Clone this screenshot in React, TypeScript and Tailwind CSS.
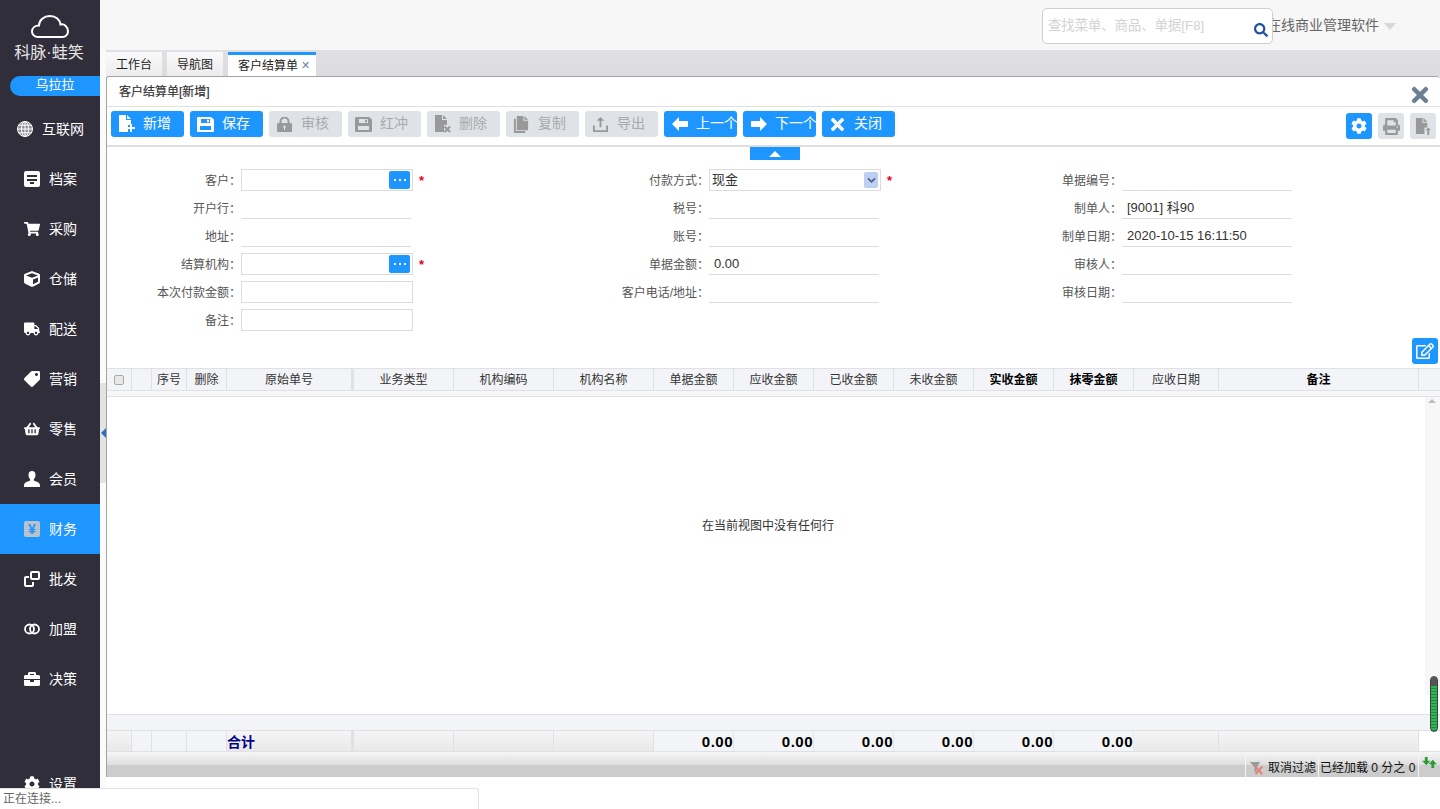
import React from 'react';
import {
  FaBriefcase,
  FaCog,
  FaCube,
  FaPrint,
  FaRegEdit,
  FaSearch,
  FaShoppingBasket,
  FaShoppingCart,
  FaTag,
  FaTimes,
  FaTruck,
} from 'react-icons/fa';

const font = 'font-["Liberation_Sans","Noto_Sans_CJK_SC",sans-serif]';

function FileIcon({ badge, className }: { badge?: 'plus' | 'x' | 'up'; className?: string }) {
  return (
    <svg viewBox="0 0 18 18" className={className} fill="currentColor">
      <path d="M1 0h7v5h5v5h-3v7H1z" />
      <path d="M9 0l4 4H9z" />
      {badge === 'plus' && <path d="M12 9h2v3h3v2h-3v3h-2v-3H9v-2h3z" />}
      {badge === 'x' && <path d="M10.500 11.500l5.500 5.500M16 11.500L10.500 17" fill="none" stroke="currentColor" strokeWidth="2.200" />}
      {badge === 'up' && <path d="M14 10l3 3h-2v5h-2v-5h-2z" />}
    </svg>
  );
}

function CopyIcon({ className }: { className?: string }) {
  return (
    <svg viewBox="0 0 18 18" className={className} fill="currentColor">
      <path d="M4 0h7v5h5v10H4z" />
      <path d="M12 0l4 4h-4z" />
      <path d="M1 3h2v13h10v2H1z" />
    </svg>
  );
}

function UploadIcon({ className }: { className?: string }) {
  return (
    <svg viewBox="0 0 18 18" className={className} fill="currentColor">
      <path d="M9 1l4 4h-3v7H8V5H5z" />
      <path d="M1 10h2v5h12v-5h2v7H1z" />
    </svg>
  );
}

function FloppyIcon({ className }: { className?: string }) {
  return (
    <svg viewBox="0 0 17 15" className={className} fill="currentColor">
      <path
        fillRule="evenodd"
        d="M1 0h13l3 2.500V14a1 1 0 01-1 1H1a1 1 0 01-1-1V1a1 1 0 011-1zm3 2v4h9V2zm8 .8v2.400h-2V2.800zM3 9v4h11V9z"
      />
    </svg>
  );
}

function LockIcon({ className }: { className?: string }) {
  return (
    <svg viewBox="0 0 15 15" className={className} fill="currentColor">
      <path d="M3.500 7V4.500a4 4 0 018 0V7" fill="none" stroke="currentColor" strokeWidth="2" />
      <path
        fillRule="evenodd"
        d="M1 6h13a1 1 0 011 1v7a1 1 0 01-1 1H1a1 1 0 01-1-1V7a1 1 0 011-1zm6.500 2.500A1.300 1.300 0 007 11v2h1v-2a1.300 1.300 0 00-.5-2.500z"
      />
    </svg>
  );
}

function ArrowIcon({ flip }: { flip?: boolean }) {
  return (
    <svg viewBox="0 0 16 14" className={`h-[14px] w-[16px] ${flip ? '-scale-x-100' : ''}`} fill="currentColor">
      <path d="M0 7L7 0v4h9v6H7v4z" />
    </svg>
  );
}

function CloudLogo() {
  return (
    <svg viewBox="0 0 38 23" className="h-[23px] w-[38px]" fill="none" stroke="#fff" strokeWidth="2">
      <path d="M7 22C3.500 22 1 19.500 1 16.500 1 13 4 10.500 8 10.500 8 5 13 1 19 1c6 0 10 4 10.500 8.500 4-1 7.500 2.500 7.500 7 0 3-2.500 5.500-5.500 5.500z" />
    </svg>
  );
}

function GlobeIcon() {
  return (
    <svg viewBox="0 0 16 16" className="h-4 w-4" fill="none" stroke="#fff" strokeWidth="1">
      <circle cx="8" cy="8" r="7.500" fill="#8f8d96" />
      <ellipse cx="8" cy="8" rx="3.500" ry="7.500" />
      <path d="M8 .5v15M.5 8h15M1.500 4.200h13M1.500 11.800h13" />
    </svg>
  );
}

function PersonIcon() {
  return (
    <svg viewBox="0 0 16 16" className="h-4 w-4" fill="#fff">
      <path d="M8 0c2.200 0 3.500 1.600 3.500 4 0 2-.8 3.500-1.700 4.300v1.200c1.500.8 6.200 1.500 6.200 5V16H0v-1.500c0-3.500 4.700-4.200 6.200-5V8.300C5.300 7.500 4.500 6 4.500 4 4.500 1.600 5.800 0 8 0z" />
    </svg>
  );
}

const menu: { label: string; icon: React.ReactNode; active?: boolean }[] = [
  { label: '互联网', icon: <GlobeIcon /> },
  {
    label: '档案',
    icon: (
      <svg viewBox="0 0 16 16" className="h-4 w-4" fill="#fff">
        <path d="M2 0h12a2 2 0 012 2v12a2 2 0 01-2 2H2a2 2 0 01-2-2V2a2 2 0 012-2zm1 4v2h10V4zm0 4v2h10V8zm3 3v2h4v-2z" fillRule="evenodd" />
      </svg>
    ),
  },
  { label: '采购', icon: <FaShoppingCart className="h-4 w-4" /> },
  { label: '仓储', icon: <FaCube className="h-4 w-4" /> },
  { label: '配送', icon: <FaTruck className="h-4 w-4" /> },
  { label: '营销', icon: <FaTag className="h-4 w-4 -scale-x-100" /> },
  { label: '零售', icon: <FaShoppingBasket className="h-4 w-4" /> },
  { label: '会员', icon: <PersonIcon /> },
  {
    label: '财务',
    active: true,
    icon: (
      <span className="flex h-4 w-4 items-center justify-center rounded-[2px] bg-[#b9c1cb] text-[14px] font-bold leading-none text-[#1e96ff]">
        ¥
      </span>
    ),
  },
  {
    label: '批发',
    icon: (
      <svg viewBox="0 0 16 16" className="h-4 w-4" fill="none" stroke="#fff" strokeWidth="2">
        <rect x="7" y="1" width="8" height="7" rx="1" />
        <path d="M5 6H2a1 1 0 00-1 1v7a1 1 0 001 1h6a1 1 0 001-1v-3" />
      </svg>
    ),
  },
  {
    label: '加盟',
    icon: (
      <svg viewBox="0 0 16 16" className="h-4 w-4" fill="none" stroke="#fff" strokeWidth="1.800">
        <circle cx="5.500" cy="8" r="4.500" />
        <circle cx="10.500" cy="8" r="4.500" />
      </svg>
    ),
  },
  { label: '决策', icon: <FaBriefcase className="h-4 w-4" /> },
];

const actions: { label: string; icon: React.ReactNode; on?: boolean }[] = [
  { label: '新增', on: true, icon: <FileIcon badge="plus" className="h-[18px] w-[18px]" /> },
  { label: '保存', on: true, icon: <FloppyIcon className="h-[15px] w-[17px]" /> },
  { label: '审核', icon: <LockIcon className="h-[15px] w-[15px]" /> },
  { label: '红冲', icon: <FloppyIcon className="h-[15px] w-[17px]" /> },
  { label: '删除', icon: <FileIcon badge="x" className="h-[18px] w-[18px]" /> },
  { label: '复制', icon: <CopyIcon className="h-[17px] w-[17px]" /> },
  { label: '导出', icon: <UploadIcon className="h-[17px] w-[17px]" /> },
  { label: '上一个', on: true, icon: <ArrowIcon /> },
  { label: '下一个', on: true, icon: <ArrowIcon flip /> },
  { label: '关闭', on: true, icon: <FaTimes className="h-[19px] w-[19px]" /> },
];

const columns: { label: string; w: string; bold?: boolean; thick?: boolean }[] = [
  { label: '', w: 'w-[20px]' },
  { label: '序号', w: 'w-[35px]' },
  { label: '删除', w: 'w-[40px]' },
  { label: '原始单号', w: 'w-[127px]', thick: true },
  { label: '业务类型', w: 'w-[100px]' },
  { label: '机构编码', w: 'w-[100px]' },
  { label: '机构名称', w: 'w-[100px]' },
  { label: '单据金额', w: 'w-[80px]' },
  { label: '应收金额', w: 'w-[80px]' },
  { label: '已收金额', w: 'w-[80px]' },
  { label: '未收金额', w: 'w-[80px]' },
  { label: '实收金额', w: 'w-[80px]', bold: true },
  { label: '抹零金额', w: 'w-[80px]', bold: true },
  { label: '应收日期', w: 'w-[85px]' },
  { label: '备注', w: 'w-[200px]', bold: true },
];

const totals = ['0.00', '0.00', '0.00', '0.00', '0.00', '0.00'];

function Lookup() {
  return (
    <span className="ml-auto mr-[2px] flex h-[18px] w-[21px] items-center justify-center gap-[3px] rounded-[2px] bg-[#1e96ff]">
      <i className="h-[2px] w-[2px] bg-white" />
      <i className="h-[2px] w-[2px] bg-white" />
      <i className="h-[2px] w-[2px] bg-white" />
    </span>
  );
}

function Star() {
  return <span className="ml-[6px] text-[13px] font-bold leading-none text-[#e60012]">*</span>;
}

function Field({
  label,
  value,
  kind,
  star,
}: {
  label: string;
  value?: string;
  kind?: 'box' | 'lookup' | 'select';
  star?: boolean;
}) {
  return (
    <div className="flex h-[28px] items-center">
      <span className="w-[134px] pt-[2px] text-right text-[12px] text-[#555]">{label}：</span>
      <div className="flex items-center">
        {kind ? (
          <div className="flex h-[22px] w-[172px] items-center border border-[#dcdcdc] bg-white pl-[2px] text-[13px] text-[#333]">
            {value}
            {kind === 'lookup' && <Lookup />}
            {kind === 'select' && (
              <span className="ml-auto mr-[2px] flex h-[16px] w-[14px] items-center justify-center rounded-[2px] bg-[#bdd0f2]">
                <svg viewBox="0 0 10 8" className="h-[7px] w-[9px]" fill="none" stroke="#4c5f85" strokeWidth="2">
                  <path d="M1 1.500l4 4 4-4" />
                </svg>
              </span>
            )}
          </div>
        ) : (
          <div className="mt-[-1px] flex h-[22px] w-[170px] items-center border-b border-[#dcdcdc] pl-[5px] pt-[1px] text-[13px] text-[#333]">
            {value}
          </div>
        )}
        {star && <Star />}
      </div>
    </div>
  );
}

export default function App() {
  return (
    <div className={`${font} relative flex h-[809px] w-[1440px] overflow-hidden bg-white`}>
      {/* Left menu */}
      <aside className="flex h-[809px] w-[100px] shrink-0 flex-col bg-[#312e3b] text-white">
        <div className="flex h-[76px] flex-col items-center pt-[15px]">
          <CloudLogo />
          <div className="mr-[2px] mt-[4px] whitespace-nowrap text-[16px] leading-[22px] text-[#e6e6e6]">科脉·蛙笑</div>
        </div>
        <div className="ml-[10px] flex h-[20px] items-start justify-center rounded-l-[10px] bg-[#1e96ff] text-[13px] leading-[18px]">
          乌拉拉
        </div>
        <nav className="mt-[8px] flex flex-1 flex-col">
          {menu.map((m) => (
            <div
              key={m.label}
              className={`flex h-[50px] items-center justify-center gap-[9px] pl-[1px] text-[14px] ${m.active ? 'bg-[#1e96ff]' : ''}`}
            >
              <span className="flex h-4 w-4 items-center justify-center">{m.icon}</span>
              <span>{m.label}</span>
            </div>
          ))}
          <div className="mt-auto flex h-[50px] items-center justify-center gap-[9px] pl-[1px] text-[14px]">
            <span className="flex h-4 w-4 items-center justify-center">
              <FaCog className="h-4 w-4" />
            </span>
            <span>设置</span>
          </div>
        </nav>
      </aside>

      <div className="flex min-w-0 flex-1 flex-col">
        {/* Top bar */}
        <header className="flex h-[50px] shrink-0 bg-[#f7f7f7] pl-[942px] pt-[8px]">
          <div className="relative z-10 flex h-[36px] w-[231px] shrink-0 items-start rounded-[5px] border border-[#cfcfcf] bg-white pl-[5px] pt-[8px] text-[13.33px] leading-[17px] text-[#d2d2d2]">
            查找菜单、商品、单据[F8]
            <FaSearch className="absolute right-[4px] top-[14px] h-[14px] w-[14px] text-[#24509c]" />
          </div>
          <div className="ml-[-6px] flex h-[36px] w-[131px] shrink-0 items-center whitespace-nowrap pb-[2px] text-[14px] text-[#666]">
            在线商业管理软件
            <span className="ml-[5px] mt-[2px] h-0 w-0 border-x-[6px] border-t-[7px] border-x-transparent border-t-[#d8d8d8]" />
          </div>
        </header>

        <div className="flex min-h-0 flex-1">
          {/* Collapse strip */}
          <div className="relative w-[6px] shrink-0 bg-[#fafafa]">
            <div className="absolute left-0 top-[333px] h-[100px] w-[6px] bg-[#e3e3e3]" />
            <div className="absolute left-[1px] top-[378px] h-0 w-0 border-y-[5px] border-r-[5px] border-y-transparent border-r-[#2c6fc2]" />
          </div>

          <div className="flex min-w-0 flex-1 flex-col">
            {/* Tabs */}
            <div className="flex h-[26px] shrink-0 items-end gap-[5px] bg-gradient-to-b from-[#e0e0e4] to-[#dcdce0] text-[12px] text-[#222]">
              <div className="flex h-[24px] w-[56px] items-center justify-center bg-gradient-to-b from-[#fafafa] to-[#ececec] pt-[2px]">工作台</div>
              <div className="flex h-[24px] w-[56px] items-center justify-center bg-gradient-to-b from-[#fafafa] to-[#ececec] pt-[2px]">导航图</div>
              <div className="flex h-[24px] w-[88px] items-center gap-[3px] border-t-[3px] border-[#1e96ff] bg-white pl-[10px]">
                客户结算单
                <span className="text-[11px] leading-none text-[#6f85a8]">✕</span>
              </div>
            </div>

            {/* Document panel */}
            <main className="flex h-[701px] shrink-0 flex-col rounded-t-[3px] border-l border-t border-[#a3a3a3] bg-white">
              <div className="flex h-[30px] shrink-0 items-center justify-between border-b border-[#e0e0e0] pl-[12px] pr-[8px]">
                <span className="text-[12px] text-[#333] [-webkit-text-stroke:0.2px_#333]">客户结算单[新增]</span>
                <FaTimes className="mt-[6px] h-[24px] w-[24px] text-[#6d7f94]" />
              </div>

              {/* Toolbar */}
              <div className="flex h-[40px] shrink-0 items-start border-b-2 border-[#dedede] pl-[4px] pt-[4px]">
                <div className="flex gap-[6px]">
                  {actions.map((a) => (
                    <div
                      key={a.label}
                      className={`flex h-[26px] w-[73px] items-center rounded-[3px] pl-[6px] text-[14px] ${
                        a.on ? 'bg-[#1e96ff] text-white' : 'bg-[#dfe2e7] text-[#aaa]'
                      }`}
                    >
                      <span className={`flex w-[19px] shrink-0 justify-center ${a.on ? 'text-white' : 'text-[#999]'}`}>{a.icon}</span>
                      <span className="mb-[2px] ml-[7px] whitespace-nowrap">{a.label}</span>
                    </div>
                  ))}
                </div>
                <div className="ml-auto mr-[4px] mt-[2px] flex gap-[6px]">
                  <div className="flex h-[26px] w-[26px] items-center justify-center rounded-[3px] bg-[#1e96ff] text-white">
                    <FaCog className="h-[16px] w-[16px]" />
                  </div>
                  <div className="flex h-[26px] w-[26px] items-center justify-center rounded-[3px] bg-[#dfe2e7] text-[#999]">
                    <FaPrint className="h-[17px] w-[17px]" />
                  </div>
                  <div className="flex h-[26px] w-[26px] items-center justify-center rounded-[3px] bg-[#dfe2e7] text-[#999]">
                    <FileIcon badge="up" className="h-[17px] w-[17px]" />
                  </div>
                </div>
              </div>

              {/* Form */}
              <div className="relative h-[221px] shrink-0">
                <div className="absolute left-[643px] top-0 flex h-[13px] w-[50px] items-center justify-center bg-[#1e96ff]">
                  <span className="h-0 w-0 border-x-[6px] border-b-[6px] border-x-transparent border-b-white" />
                </div>
                <div className="flex pt-[19px]">
                  <div className="w-[468px] shrink-0">
                    <Field label="客户" kind="lookup" star />
                    <Field label="开户行" />
                    <Field label="地址" />
                    <Field label="结算机构" kind="lookup" star />
                    <Field label="本次付款金额" kind="box" />
                    <Field label="备注" kind="box" />
                  </div>
                  <div className="w-[413px] shrink-0">
                    <Field label="付款方式" kind="select" value="现金" star />
                    <Field label="税号" />
                    <Field label="账号" />
                    <Field label="单据金额" value="0.00" />
                    <Field label="客户电话/地址" />
                  </div>
                  <div className="shrink-0">
                    <Field label="单据编号" />
                    <Field label="制单人" value="[9001] 科90" />
                    <Field label="制单日期" value="2020-10-15 16:11:50" />
                    <Field label="审核人" />
                    <Field label="审核日期" />
                  </div>
                </div>
                <div className="absolute right-[2px] top-[191px] flex h-[26px] w-[26px] items-center justify-center rounded-[3px] bg-[#1e96ff] text-white">
                  <FaRegEdit className="h-[18px] w-[18px]" />
                </div>
              </div>

              {/* Grid header */}
              <div className="flex h-[23px] shrink-0 border-y border-[#dfe1e6] bg-[#f3f4f8] text-[12px] text-[#333]">
                <div className="flex w-[25px] shrink-0 items-center justify-center border-r border-[#dfe1e6]">
                  <span className="h-[10px] w-[10px] rounded-[2px] border border-[#aaa] bg-[#e8e8e8]" />
                </div>
                {columns.map((c) => (
                  <div
                    key={c.label || 'blank'}
                    className={`flex ${c.w} shrink-0 items-center justify-center ${
                      c.thick ? 'border-r-[3px]' : 'border-r'
                    } border-[#dfe1e6] ${c.bold ? 'font-bold text-black' : ''}`}
                  >
                    {c.label}
                  </div>
                ))}
              </div>
              <div className="h-[6px] shrink-0 border-b border-[#dfe1e6] bg-[#f7f7f8]" />

              {/* Grid body */}
              <div className="flex min-h-0 flex-1">
                <div className="flex flex-1 items-center justify-center pb-[60px] pl-[4px] text-[12px] text-[#333]">在当前视图中没有任何行</div>
                <div className="relative w-[15px] shrink-0">
                  <div className="h-[298px] bg-[#f7f7f7]" />
                  <span className="absolute left-[3px] top-[2px] h-0 w-0 border-x-[4px] border-b-[4px] border-x-transparent border-b-[#bbb]" />
                </div>
              </div>

              {/* Summary */}
              <div className="h-[17px] shrink-0 border-y border-[#dfe1e6] bg-[#f3f4f8]" />
              <div className="flex h-[21px] shrink-0 border-b border-[#dfe1e6] bg-gradient-to-b from-[#f5f5f5] to-[#e9e9e9] text-[15px] font-bold leading-[22px] tracking-[0.5px] text-black">
                <div className="w-[25px] shrink-0 border-r border-[#dfe1e6]" />
                <div className="w-[20px] shrink-0 border-r border-[#dfe1e6] bg-[#f3f4f8]" />
                <div className="w-[35px] shrink-0 border-r border-[#dfe1e6] bg-[#f3f4f8]" />
                <div className="w-[40px] shrink-0 border-r border-[#dfe1e6] bg-[#f3f4f8]" />
                <div className="w-[127px] shrink-0 border-r-[3px] border-[#dfe1e6] text-[14px] tracking-normal text-[#00008b]">合计</div>
                <div className="w-[100px] shrink-0 border-r border-[#dfe1e6]" />
                <div className="w-[100px] shrink-0 border-r border-[#dfe1e6]" />
                <div className="w-[100px] shrink-0 border-r border-[#dfe1e6]" />
                {totals.map((t, i) => (
                  <div key={i} className="w-[80px] shrink-0 border-r border-[#e8e8ec] bg-[#f3f4f8] text-right">
                    {t}
                  </div>
                ))}
                <div className="w-[85px] shrink-0 border-r border-[#dfe1e6]" />
                <div className="w-[200px] shrink-0 border-r border-[#dfe1e6]" />
                <div className="flex-1 bg-white" />
              </div>

              {/* Status bar */}
              <div className="flex h-[25px] shrink-0 items-end justify-end bg-[linear-gradient(to_bottom,#f6f6f6_0%,#dedede_50%,#cbcccb_52%,#cbcccb_100%)] text-[12px] text-[#111]">
                <div className="flex h-[22px] items-center gap-[4px] border-l border-[#f5f5f5] pl-[3px] pr-[2px] pt-[4px]">
                  <svg viewBox="0 0 16 16" className="h-[15px] w-[15px]">
                    <path d="M1 1h11L8 7v6L6 11V7z" fill="#9a9a9a" />
                    <path d="M7 6l7 8M14 6l-7 8" stroke="#ea7a74" strokeWidth="2" />
                  </svg>
                  取消过滤
                </div>
                <div className="flex h-[22px] w-[100px] items-center whitespace-nowrap border-l border-[#f5f5f5] pl-[1px] pt-[4px]">已经加载 0 分之 0</div>
                <div className="flex h-[22px] w-[22px] items-start justify-center border-l border-[#f5f5f5] pt-[1px]">
                  <svg viewBox="0 0 16 14" className="h-[13px] w-[15px]" fill="#2e9a33">
                    <path d="M3 1h3v4h3L4.500 10 0 5h3z" />
                    <path d="M11.500 4L16 9h-3v4h-3V9H7z" />
                  </svg>
                </div>
              </div>
            </main>
          </div>
        </div>
      </div>

      {/* Green scroll thumb */}
      <div className="absolute left-[1430px] top-[676px] h-[56px] w-[8px] rounded-[4px] border border-[#3f3f3f] bg-[repeating-linear-gradient(to_bottom,#2fb556_0px,#2fb556_2px,#1c8f3e_2px,#1c8f3e_3px)]">
        <div className="h-[9px] rounded-t-[4px] bg-[#555]" />
      </div>

      {/* Loading status */}
      <div className="absolute bottom-0 left-0 h-[21px] w-[479px] rounded-tr-[3px] border-r border-t border-[#e2e2e2] bg-white pl-[3px] text-[12px] leading-[21px] text-[#666]">
        正在连接...
      </div>
    </div>
  );
}
